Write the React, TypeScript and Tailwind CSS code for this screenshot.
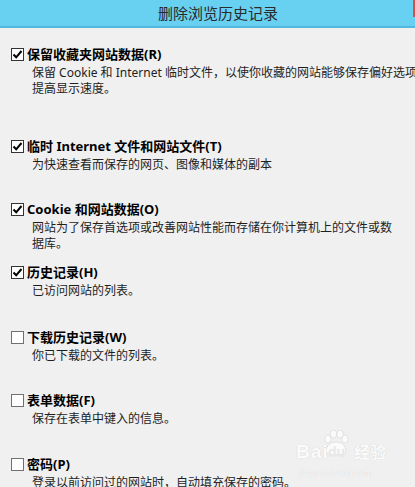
import React from "react";

type Item = {
  checked: boolean;
  label: string;
  lines: string[];
  mt: string;
};

const items: Item[] = [
  {
    checked: true,
    label: "保留收藏夹网站数据(R)",
    lines: ["保留 Cookie 和 Internet 临时文件，以使你收藏的网站能够保存偏好选项并", "提高显示速度。"],
    mt: "mt-[18px]",
  },
  {
    checked: true,
    label: "临时 Internet 文件和网站文件(T)",
    lines: ["为快速查看而保存的网页、图像和媒体的副本"],
    mt: "mt-[41px]",
  },
  {
    checked: true,
    label: "Cookie 和网站数据(O)",
    lines: ["网站为了保存首选项或改善网站性能而存储在你计算机上的文件或数", "据库。"],
    mt: "mt-[28px]",
  },
  {
    checked: true,
    label: "历史记录(H)",
    lines: ["已访问网站的列表。"],
    mt: "mt-[12px]",
  },
  {
    checked: false,
    label: "下载历史记录(W)",
    lines: ["你已下载的文件的列表。"],
    mt: "mt-[30px]",
  },
  {
    checked: false,
    label: "表单数据(F)",
    lines: ["保存在表单中键入的信息。"],
    mt: "mt-[28px]",
  },
  {
    checked: false,
    label: "密码(P)",
    lines: ["登录以前访问过的网站时，自动填充保存的密码。"],
    mt: "mt-[29px]",
  },
];

function Box({ checked }: { checked: boolean }) {
  return (
    <div
      className={
        "w-[13px] h-[13px] shrink-0 border bg-white flex items-center justify-center " +
        (checked ? "border-[#333333]" : "border-[#707070]")
      }
    >
      {checked && (
        <svg width="11" height="11" viewBox="0 0 11 11">
          <path d="M1.5 5.5 L4.2 8.3 L9.5 2" fill="none" stroke="#000" strokeWidth="2" />
        </svg>
      )}
    </div>
  );
}

function Row({ item }: { item: Item }) {
  return (
    <div className={item.mt}>
      <div className="flex items-center h-[16px]">
        <Box checked={item.checked} />
        <span className="ml-[3px] text-[13px] leading-[16px] font-bold text-black whitespace-nowrap">
          {item.label}
        </span>
      </div>
      <div className="mt-[3px] pl-[21px] text-[12px] leading-[16px] text-[#1e1e1e]">
        {item.lines.map((l, i) => (
          <div key={i} className="whitespace-nowrap">
            {l}
          </div>
        ))}
      </div>
    </div>
  );
}

function Watermark() {
  return (
    <div className="absolute left-[294px] top-[430px] pointer-events-none">
      <div className="relative w-[100px] h-[50px]">
        <svg className="absolute left-[28px] top-[0px]" width="28" height="26" viewBox="0 0 28 26">
          <g fill="#fbfbfb" stroke="#dcdcdc" strokeWidth="0.8">
            <ellipse cx="6" cy="9" rx="3.2" ry="4" />
            <ellipse cx="11.5" cy="4" rx="3.2" ry="4" />
            <ellipse cx="18" cy="4" rx="3.2" ry="4" />
            <ellipse cx="23" cy="9" rx="3.2" ry="4" />
            <path d="M4 22 C4 15 9 12 14 12 C19 12 24 15 24 22 C24 26 4 26 4 22 Z" />
          </g>
        </svg>
        <span
          className="absolute left-[2px] top-[12px] text-[19px] leading-[20px] font-bold text-[#fbfbfb] tracking-[1px]"
          style={{ fontFamily: "'Liberation Sans', sans-serif", textShadow: "0 0 1px #c8c8c8" }}
        >
          Bai
        </span>
        <span
          className="absolute left-[34px] top-[14px] text-[14px] leading-[16px] font-bold text-[#e8e8e8]"
          style={{ fontFamily: "'Liberation Sans', sans-serif" }}
        >
          du
        </span>
        <span
          className="absolute left-[60px] top-[12px] text-[16px] leading-[20px] font-bold text-[#fbfbfb]"
          style={{ textShadow: "0 0 1px #c8c8c8" }}
        >
          经验
        </span>
        <span
          className="absolute left-[4px] top-[37px] text-[10px] leading-[12px] text-[#fbfbfb]"
          style={{ fontFamily: "'Liberation Serif', serif", textShadow: "0 0 1px #c8c8c8" }}
        >
          jingyan.baidu.com
        </span>
      </div>
    </div>
  );
}

export default function App() {
  return (
    <div
      className="relative w-[415px] h-[487px] overflow-hidden bg-[#f0f0f0]"
      style={{ fontFamily: "'Noto Sans', 'Noto Sans CJK SC', sans-serif" }}
    >
      <div className="relative h-[28px] bg-[#68d0f0] border-b-2 border-[#52b9de] flex items-center justify-center pl-[21px]">
        <span className="text-[15px] leading-[18px] text-[#2a2a2a]">删除浏览历史记录</span>
        <div className="absolute right-0 top-0 w-[2px] h-[17px] bg-[#d4504c]" />
      </div>
      <div className="pl-[11px]">
        {items.map((it, i) => (
          <Row key={i} item={it} />
        ))}
      </div>
      <Watermark />
    </div>
  );
}
